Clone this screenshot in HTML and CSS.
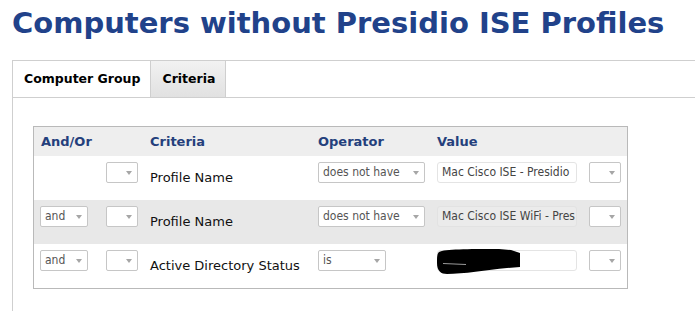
FILE: index.html
```html
<!DOCTYPE html>
<html>
<head>
<meta charset="utf-8">
<link rel="stylesheet" href="styles.css">
</head>
<body>
<h1 class="title">Computers without Presidio ISE Profiles</h1>
<div class="tabs">
  <div class="tab tab-active">Computer Group</div>
  <div class="tab tab-criteria">Criteria</div>
</div>
<div class="panel">
  <div class="ctable">
    <div class="row row-head">
      <div class="hcell">And/Or</div>
      <div class="hcell"></div>
      <div class="hcell">Criteria</div>
      <div class="hcell">Operator</div>
      <div class="hcell">Value</div>
      <div class="hcell"></div>
    </div>
    <div class="row">
      <div class="cell"></div>
      <div class="cell"><div class="sel sel-sm"><span class="sel-text"></span><span class="arrow"></span></div></div>
      <div class="cell cell-text">Profile Name</div>
      <div class="cell"><div class="sel sel-op"><span class="sel-text">does not have</span><span class="arrow"></span></div></div>
      <div class="cell"><div class="val">Mac Cisco ISE - Presidio</div></div>
      <div class="cell"><div class="sel sel-sm"><span class="sel-text"></span><span class="arrow"></span></div></div>
    </div>
    <div class="row row-alt">
      <div class="cell"><div class="sel sel-and"><span class="sel-text">and</span><span class="arrow"></span></div></div>
      <div class="cell"><div class="sel sel-sm"><span class="sel-text"></span><span class="arrow"></span></div></div>
      <div class="cell cell-text">Profile Name</div>
      <div class="cell"><div class="sel sel-op"><span class="sel-text">does not have</span><span class="arrow"></span></div></div>
      <div class="cell"><div class="val val-disabled">Mac Cisco ISE WiFi - Pres</div></div>
      <div class="cell"><div class="sel sel-sm"><span class="sel-text"></span><span class="arrow"></span></div></div>
    </div>
    <div class="row">
      <div class="cell"><div class="sel sel-and"><span class="sel-text">and</span><span class="arrow"></span></div></div>
      <div class="cell"><div class="sel sel-sm"><span class="sel-text"></span><span class="arrow"></span></div></div>
      <div class="cell cell-text">Active Directory Status</div>
      <div class="cell"><div class="sel sel-is"><span class="sel-text">is</span><span class="arrow"></span></div></div>
      <div class="cell"><div class="val val-redacted">
        <svg class="redact" width="86" height="27" viewBox="0 0 86 27">
          <path d="M2,4 C8,1 30,1 62,1 L74,2 L83,5 L83,19 L70,20 C50,22 26,26 10,26 C4,26 0,23 0,15 C0,9 0,6 2,4 Z" fill="#000"/>
          <path d="M6,15.5 L29,16.5" stroke="#9a9a9a" stroke-width="1" fill="none"/>
        </svg>
      </div></div>
      <div class="cell"><div class="sel sel-sm"><span class="sel-text"></span><span class="arrow"></span></div></div>
    </div>
  </div>
</div>
</body>
</html>
```

FILE: styles.css
```css
html, body {
  margin: 0;
  padding: 0;
  background: #ffffff;
}
body {
  font-family: "DejaVu Sans", Verdana, sans-serif;
  color: #000;
  overflow: hidden;
}
.title {
  margin: 6px 0 20px 12px;
  font-size: 29px;
  line-height: 34px;
  font-weight: bold;
  color: #21428a;
  white-space: nowrap;
}
.tabs {
  display: flex;
  margin-left: 12px;
  border-top: 1px solid #cfcfcf;
  border-bottom: 1px solid #cfcfcf;
  border-left: 1px solid #cfcfcf;
  height: 36px;
}
.tab {
  padding: 0 10px 0 11px;
  font-size: 12.5px;
  font-weight: bold;
  line-height: 36px;
  border-right: 1px solid #cfcfcf;
  white-space: nowrap;
}
.tab-criteria {
  background: linear-gradient(#f2f2f2, #e1e1e1);
}
.panel {
  margin-left: 12px;
  border-left: 1px solid #cfcfcf;
  padding: 28px 0 30px 20px;
}
.ctable {
  width: 595px;
  box-sizing: border-box;
  border: 1px solid #b9b9b9;
}
.row {
  display: grid;
  grid-template-columns: 66px 44px 168px 119px 152px 1fr;
  padding-left: 6px;
  height: 44px;
  align-items: start;
}
.row-head {
  height: 29px;
  background: #eeeeee;
  align-items: center;
}
.row-alt {
  background: #e8e8e8;
}
.hcell {
  font-size: 13px;
  font-weight: bold;
  color: #243f7c;
  line-height: 29px;
  white-space: nowrap;
}
.row-head .hcell:first-child {
  padding-left: 1px;
}
.cell {
  padding-top: 6px;
}
.cell-text {
  padding-top: 14px;
  font-size: 13px;
  line-height: 16px;
  color: #111;
  white-space: nowrap;
}
.sel {
  position: relative;
  box-sizing: border-box;
  height: 21px;
  border: 1px solid #c6c6c6;
  border-radius: 2px;
  background: #ffffff;
  font-family: "DejaVu Sans Condensed", "DejaVu Sans", sans-serif;
  font-size: 12px;
  line-height: 19px;
  color: #555;
  padding-left: 4px;
  white-space: nowrap;
}
.sel-sm { width: 32px; }
.sel-and { width: 48px; }
.sel-op { width: 107px; }
.sel-is { width: 68px; }
.arrow {
  position: absolute;
  right: 5px;
  top: 8px;
  width: 0;
  height: 0;
  border-left: 3.5px solid transparent;
  border-right: 3.5px solid transparent;
  border-top: 4px solid #a6a6a6;
}
.val {
  position: relative;
  box-sizing: border-box;
  width: 140px;
  height: 21px;
  border: 1px solid #e4e4e4;
  border-radius: 3px;
  background: #ffffff;
  font-family: "DejaVu Sans Condensed", "DejaVu Sans", sans-serif;
  font-size: 12px;
  line-height: 19px;
  color: #444;
  padding-left: 4px;
  white-space: nowrap;
  overflow: hidden;
}
.val-disabled {
  background: #ebebeb;
  border-color: #e2e2e2;
}
.val-redacted {
  overflow: visible;
}
.redact {
  position: absolute;
  left: -1px;
  top: -3px;
}
```
